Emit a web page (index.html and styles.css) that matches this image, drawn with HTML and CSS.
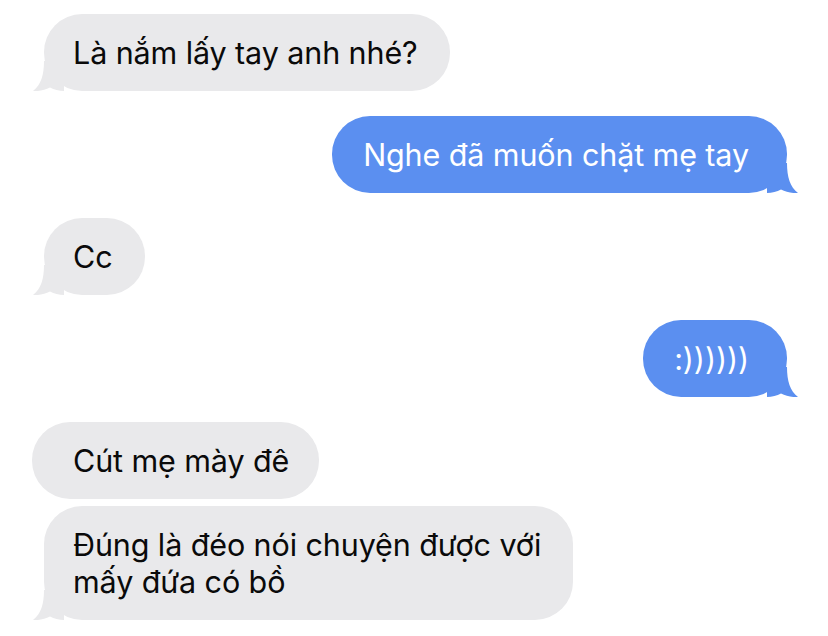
FILE: index.html
```html
<!DOCTYPE html>
<html lang="vi">
<head>
    <meta charset="UTF-8">
    <meta name="viewport" content="width=device-width, initial-scale=1.0">
    <title>Tin nhắn</title>
    <link rel="stylesheet" href="styles.css">
</head>
    <body>
        <div class="chat">
            <div class="msg them">
                Là nắm lấy tay anh nhé?
                <svg class="tail" viewBox="0 0 31 30"><path d="M0 0H20C20 14 23 24 31 30C25 30.5 19 29 14 26.5C10 28.5 5 30 0 30Z"/></svg>
            </div>
            <div class="msg me">
                Nghe đã muốn chặt mẹ tay
                <svg class="tail" viewBox="0 0 31 30"><path d="M0 0H20C20 14 23 24 31 30C25 30.5 19 29 14 26.5C10 28.5 5 30 0 30Z"/></svg>
            </div>
            <div class="msg them">
                Cc
                <svg class="tail" viewBox="0 0 31 30"><path d="M0 0H20C20 14 23 24 31 30C25 30.5 19 29 14 26.5C10 28.5 5 30 0 30Z"/></svg>
            </div>
            <div class="msg me">
                :))))))
                <svg class="tail" viewBox="0 0 31 30"><path d="M0 0H20C20 14 23 24 31 30C25 30.5 19 29 14 26.5C10 28.5 5 30 0 30Z"/></svg>
            </div>
            <div class="msg them no-tail">Cút mẹ mày đê</div>
            <div class="msg them cont">
                Đúng là đéo nói chuyện được với<br>mấy đứa có bồ
                <svg class="tail" viewBox="0 0 31 30"><path d="M0 0H20C20 14 23 24 31 30C25 30.5 19 29 14 26.5C10 28.5 5 30 0 30Z"/></svg>
            </div>
        </div>
    </body>
</html>
```

FILE: styles.css
```css
body {
    margin: 0;
    background-color: #fff;
    font-family: Inter, "Noto Sans", sans-serif;
}

.chat {
    display: flex;
    flex-direction: column;
    padding: 14px 41px 0 44px;
}

.msg {
    position: relative;
    padding: 20px 32px 20px 29px;
    border-radius: 38px;
    font-size: 30.5px;
    line-height: 37px;
    letter-spacing: -0.1px;
}

.msg + .msg {
    margin-top: 25px;
}

    .msg.cont {
        margin-top: 7px;
    }

.them {
    align-self: flex-start;
    background-color: #e9e9eb;
    color: #0a0a0a;
}

    .them.no-tail {
        margin-left: -12px;
        padding-left: 41px;
        padding-right: 30px;
    }

.me {
    align-self: flex-end;
    background-color: #5b8ff0;
    color: #fff;
    padding: 20px 38px 20px 31px;
}

.tail {
    position: absolute;
    bottom: 0;
    width: 31px;
    height: 30px;
}

    .me .tail {
        right: -11px;
        fill: #5b8ff0;
    }

    .them .tail {
        left: -11px;
        fill: #e9e9eb;
        transform: scaleX(-1);
    }
```
